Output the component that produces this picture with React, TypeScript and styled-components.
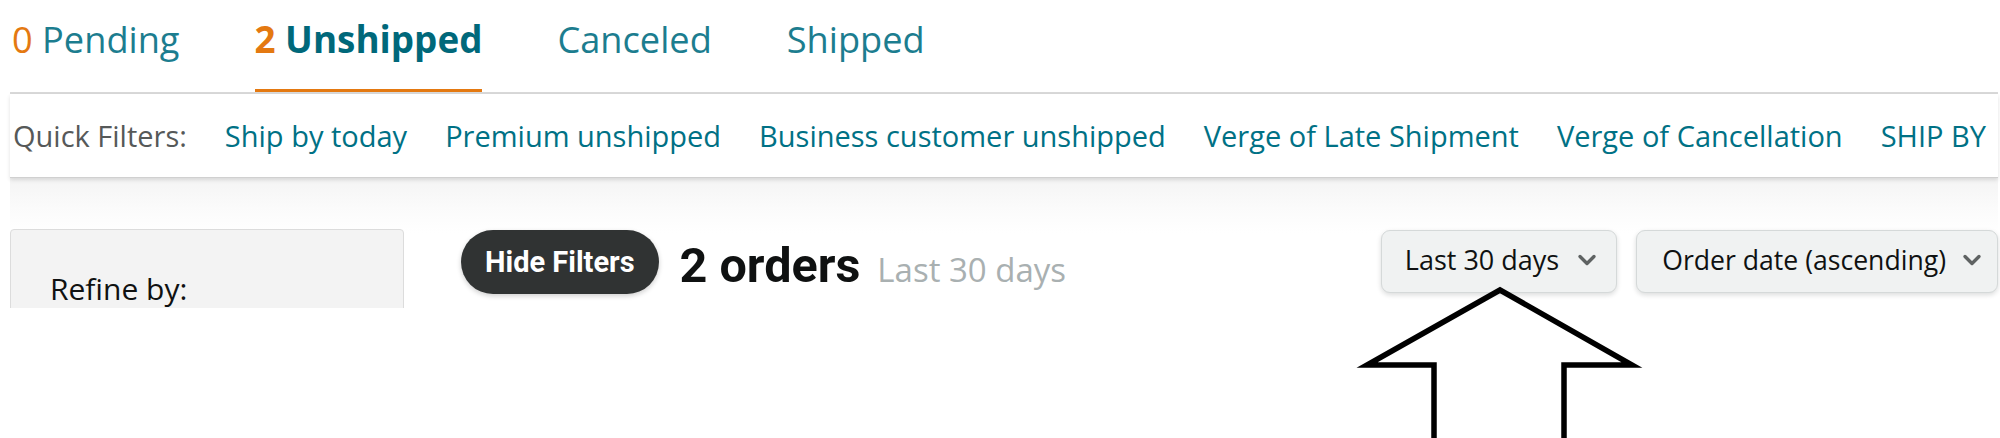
import React from "react";
import styled, { createGlobalStyle } from "styled-components";

const Global = createGlobalStyle`
  html, body { margin: 0; padding: 0; background: #ffffff; }
  body { font-family: "Open Sans", "Noto Sans", sans-serif; color: #0f1111; }
  * { box-sizing: border-box; }
`;

const Page = styled.div`
  position: relative;
  width: 2000px;
  height: 438px;
  overflow: hidden;
  background: #ffffff;
`;

const Shot = styled.div`
  height: 308px;
  overflow: hidden;
  padding: 0 2px 0 10px;
`;

const TabBar = styled.nav`
  display: flex;
  gap: 75px;
  padding-left: 2px;
  border-bottom: 2px solid #d9d9d9;
`;

const Tab = styled.div<{ $active?: boolean }>`
  padding: 15px 0 25px;
  font-family: "Open Sans", sans-serif;
  font-size: ${(p) => (p.$active ? "36.8px" : "36.2px")};
  line-height: 49px;
  font-weight: ${(p) => (p.$active ? 700 : 400)};
  color: ${(p) => (p.$active ? "#00687a" : "#1c7d8f")};
  border-bottom: 3px solid ${(p) => (p.$active ? "#e47911" : "transparent")};
  white-space: nowrap;
`;

const Count = styled.span`
  color: #e47911;
`;

const QuickBar = styled.div`
  display: flex;
  gap: 38px;
  padding: 22px 0 21px 3px;
  border-bottom: 1px solid #d0d0d0;
  box-shadow: 0 2px 4px rgba(0, 0, 0, 0.12);
  white-space: nowrap;
  overflow: hidden;
  font-size: 29px;
  line-height: 40px;
  position: relative;
  z-index: 1;
`;

const QuickLabel = styled.span`
  color: #565959;
`;

const QuickLink = styled.span`
  color: #007185;
`;

const Main = styled.div`
  display: flex;
  align-items: flex-start;
  padding-top: 51px;
  background: linear-gradient(to bottom, #f4f4f4 0px, #fbfbfb 30px, #ffffff 55px);
  height: 140px;
`;

const Sidebar = styled.aside`
  flex: none;
  width: 394px;
  height: 140px;
  background: #f3f3f3;
  border: 1px solid #dcdcdc;
  border-radius: 4px 4px 0 0;
  padding: 39px 38px 0 39px;
`;

const RefineTitle = styled.div`
  font-size: 30px;
  line-height: 40px;
  color: #0f1111;
`;

const Toolbar = styled.div`
  flex: 1;
  display: flex;
  align-items: center;
  padding-left: 57px;
`;

const HideButton = styled.button`
  height: 64px;
  padding: 0 24px;
  border: none;
  border-radius: 32px;
  background: #303333;
  color: #ffffff;
  font-family: Roboto, "Open Sans", sans-serif;
  font-weight: 700;
  font-size: 29px;
  box-shadow: 0 2px 5px rgba(15, 17, 17, 0.2);
`;

const Heading = styled.div`
  display: flex;
  align-items: baseline;
  gap: 17px;
  margin-left: 21px;
  padding-top: 9px;
  white-space: nowrap;
`;

const OrderCount = styled.span`
  font-family: Roboto, "Open Sans", sans-serif;
  font-weight: 700;
  font-size: 48.5px;
  line-height: 56px;
  color: #0f1111;
`;

const RangeNote = styled.span`
  font-size: 33px;
  color: #a9b0b1;
`;

const Controls = styled.div`
  margin-left: auto;
  display: flex;
  gap: 19px;
`;

const Select = styled.div`
  height: 63px;
  display: flex;
  align-items: center;
  gap: 18px;
  padding: 0 19px 3px 23px;
  background: #f0f2f2;
  border: 1px solid #d5d9d9;
  border-radius: 9px;
  box-shadow: 0 2px 5px rgba(15, 17, 17, 0.15);
  font-size: 27px;
  line-height: 36px;
  color: #0f1111;
  white-space: nowrap;

  &:last-child {
    gap: 16px;
    padding-right: 15px;
    padding-left: 25px;
    font-size: 26.6px;
  }
`;

const Overlay = styled.svg`
  position: absolute;
  left: 0;
  top: 0;
  pointer-events: none;
`;

const Chevron = () => (
  <svg width="20" height="12" viewBox="0 0 20 12">
    <polyline
      points="3,2.5 10,9.5 17,2.5"
      fill="none"
      stroke="#5f6363"
      strokeWidth="3.4"
      strokeLinecap="round"
      strokeLinejoin="round"
    />
  </svg>
);

const quickLinks = [
  "Ship by today",
  "Premium unshipped",
  "Business customer unshipped",
  "Verge of Late Shipment",
  "Verge of Cancellation",
  "SHIP BY",
];

export default function App() {
  return (
    <Page>
      <Global />
      <Shot>
        <TabBar>
          <Tab>
            <Count>0</Count> Pending
          </Tab>
          <Tab $active>
            <Count>2</Count> Unshipped
          </Tab>
          <Tab>Canceled</Tab>
          <Tab>Shipped</Tab>
        </TabBar>
        <QuickBar>
          <QuickLabel>Quick Filters:</QuickLabel>
          {quickLinks.map((l) => (
            <QuickLink key={l}>{l}</QuickLink>
          ))}
        </QuickBar>
        <Main>
          <Sidebar>
            <RefineTitle>Refine by:</RefineTitle>
          </Sidebar>
          <Toolbar>
            <HideButton>Hide Filters</HideButton>
            <Heading>
              <OrderCount>2 orders</OrderCount>
              <RangeNote>Last 30 days</RangeNote>
            </Heading>
            <Controls>
              <Select>
                Last 30 days
                <Chevron />
              </Select>
              <Select>
                Order date (ascending)
                <Chevron />
              </Select>
            </Controls>
          </Toolbar>
        </Main>
      </Shot>
      <Overlay width="2000" height="438" viewBox="0 0 2000 438">
        <path
          d="M1434 450 V365 H1367 L1500 290 L1632 365 H1564 V450"
          fill="none"
          stroke="#000000"
          strokeWidth="5.5"
          strokeLinejoin="miter"
        />
      </Overlay>
    </Page>
  );
}
